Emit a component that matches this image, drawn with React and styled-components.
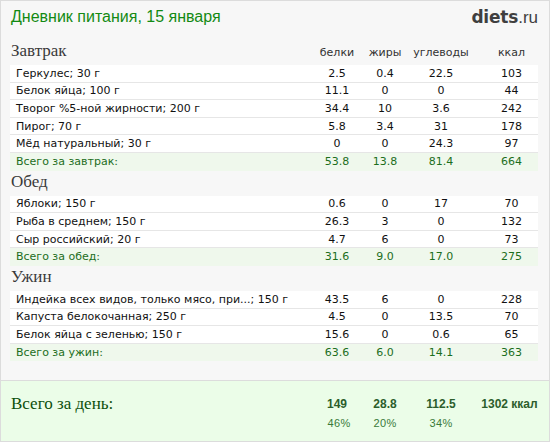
import React from "react";
import styled, { createGlobalStyle } from "styled-components";

const Global = createGlobalStyle`
  html, body { margin: 0; padding: 0; background: #ffffff; }
  * { box-sizing: border-box; }
`;

const Panel = styled.div`
  width: 550px;
  height: 442px;
  border: 1px solid #dcdcdc;
  background: #f7f7f7;
  display: flex;
  flex-direction: column;
  overflow: hidden;
`;

const Content = styled.div`
  padding: 0 11px 0 9px;
  flex: 1;
`;

const Header = styled.div`
  height: 39px;
  display: flex;
  align-items: flex-start;
  justify-content: space-between;
  padding-top: 6px;
`;

const Title = styled.h1`
  margin: 0;
  font-family: "Liberation Sans", Arial, sans-serif;
  font-weight: normal;
  font-size: 16px;
  line-height: 20px;
  color: #138a13;
  padding-left: 1px;
`;

const Logo = styled.div`
  font-family: "DejaVu Sans", Verdana, sans-serif;
  font-size: 17px;
  line-height: 20px;
  font-weight: bold;
  color: #3f3f3f;
  letter-spacing: -0.2px;
  span { font-weight: normal; font-family: "Liberation Sans", Arial, sans-serif; letter-spacing: 0; }
`;

const Grid = styled.div`
  display: grid;
  grid-template-columns: 1fr 52px 44px 68px 63px;
  align-items: center;
`;

const SectionHead = styled(Grid)`
  height: 25px;
  align-items: end;
  padding-bottom: 5px;
`;

const Meal = styled.div`
  font-family: "Liberation Serif", "Times New Roman", serif;
  font-size: 17px;
  line-height: 18px;
  color: #3a3a3a;
  padding-left: 1px;
`;

const ColHead = styled.div`
  font-family: "DejaVu Sans", Verdana, sans-serif;
  font-size: 11px;
  line-height: 13px;
  color: #333333;
  text-align: center;
  padding-left: ${(p) => (p.$last ? "10px" : "0")};
  padding-bottom: 1px;
`;

const Row = styled(Grid)`
  height: 17.6px;
  background: ${(p) => (p.$total ? "#eff8ec" : "#ffffff")};
  border-bottom: 1px solid ${(p) => (p.$total ? "#eff8ec" : "#e6e6e6")};
  font-family: "DejaVu Sans", Verdana, sans-serif;
  font-size: 11px;
  line-height: 13px;
  color: ${(p) => (p.$total ? "#1c6e1c" : "#111111")};
`;

const Name = styled.div`
  padding-left: 6px;
  white-space: nowrap;
  overflow: hidden;
`;

const Num = styled.div`
  text-align: center;
  padding-left: ${(p) => (p.$last ? "10px" : "0")};
`;

const DayTotal = styled.div`
  height: 61px;
  border-top: 1px solid #dcdcdc;
  background: #ebfde8;
  display: grid;
  grid-template-columns: 1fr 52px 44px 68px 63px;
  grid-template-rows: 20px 18px;
  padding: 13px 11px 0 9px;
`;

const DayLabel = styled.div`
  grid-row: 1 / span 2;
  font-family: "Liberation Serif", "Times New Roman", serif;
  font-size: 17px;
  line-height: 20px;
  color: #0c4f0c;
  padding-left: 1px;
`;

const DayValue = styled.div`
  font-family: "Liberation Sans", Arial, sans-serif;
  font-weight: bold;
  font-size: 12px;
  line-height: 20px;
  color: #2c5e2c;
  text-align: center;
  white-space: nowrap;
  padding-left: ${(p) => (p.$last ? "6px" : "0")};
`;

const DayPct = styled.div`
  font-family: "Liberation Sans", Arial, sans-serif;
  font-size: 11px;
  line-height: 18px;
  color: #3a7a3a;
  text-align: center;
  letter-spacing: 0.4px;
  padding-left: ${(p) => (p.$shift || 0)}px;
`;

const meals = [
  {
    name: "Завтрак",
    cols: true,
    items: [
      ["Геркулес; 30 г", "2.5", "0.4", "22.5", "103"],
      ["Белок яйца; 100 г", "11.1", "0", "0", "44"],
      ["Творог %5-ной жирности; 200 г", "34.4", "10", "3.6", "242"],
      ["Пирог; 70 г", "5.8", "3.4", "31", "178"],
      ["Мёд натуральный; 30 г", "0", "0", "24.3", "97"],
    ],
    total: ["Всего за завтрак:", "53.8", "13.8", "81.4", "664"],
  },
  {
    name: "Обед",
    items: [
      ["Яблоки; 150 г", "0.6", "0", "17", "70"],
      ["Рыба в среднем; 150 г", "26.3", "3", "0", "132"],
      ["Сыр российский; 20 г", "4.7", "6", "0", "73"],
    ],
    total: ["Всего за обед:", "31.6", "9.0", "17.0", "275"],
  },
  {
    name: "Ужин",
    items: [
      ["Индейка всех видов, только мясо, при...; 150 г", "43.5", "6", "0", "228"],
      ["Капуста белокочанная; 250 г", "4.5", "0", "13.5", "70"],
      ["Белок яйца с зеленью; 150 г", "15.6", "0", "0.6", "65"],
    ],
    total: ["Всего за ужин:", "63.6", "6.0", "14.1", "363"],
  },
];

function DataRow({ cells, total }) {
  return (
    <Row $total={total}>
      <Name>{cells[0]}</Name>
      <Num>{cells[1]}</Num>
      <Num>{cells[2]}</Num>
      <Num>{cells[3]}</Num>
      <Num $last>{cells[4]}</Num>
    </Row>
  );
}

export default function App() {
  return (
    <>
      <Global />
      <Panel>
        <Content>
          <Header>
            <Title>Дневник питания, 15 января</Title>
            <Logo>
              diets<span>.ru</span>
            </Logo>
          </Header>
          {meals.map((m) => (
            <section key={m.name}>
              <SectionHead>
                <Meal>{m.name}</Meal>
                {m.cols && (
                  <>
                    <ColHead>белки</ColHead>
                    <ColHead>жиры</ColHead>
                    <ColHead>углеводы</ColHead>
                    <ColHead $last>ккал</ColHead>
                  </>
                )}
              </SectionHead>
              {m.items.map((it) => (
                <DataRow key={it[0]} cells={it} />
              ))}
              <DataRow cells={m.total} total />
            </section>
          ))}
        </Content>
        <DayTotal>
          <DayLabel>Всего за день:</DayLabel>
          <DayValue>149</DayValue>
          <DayValue>28.8</DayValue>
          <DayValue>112.5</DayValue>
          <DayValue $last>1302 ккал</DayValue>
          <DayPct $shift={4}>46%</DayPct>
          <DayPct>20%</DayPct>
          <DayPct>34%</DayPct>
          <div />
        </DayTotal>
      </Panel>
    </>
  );
}
